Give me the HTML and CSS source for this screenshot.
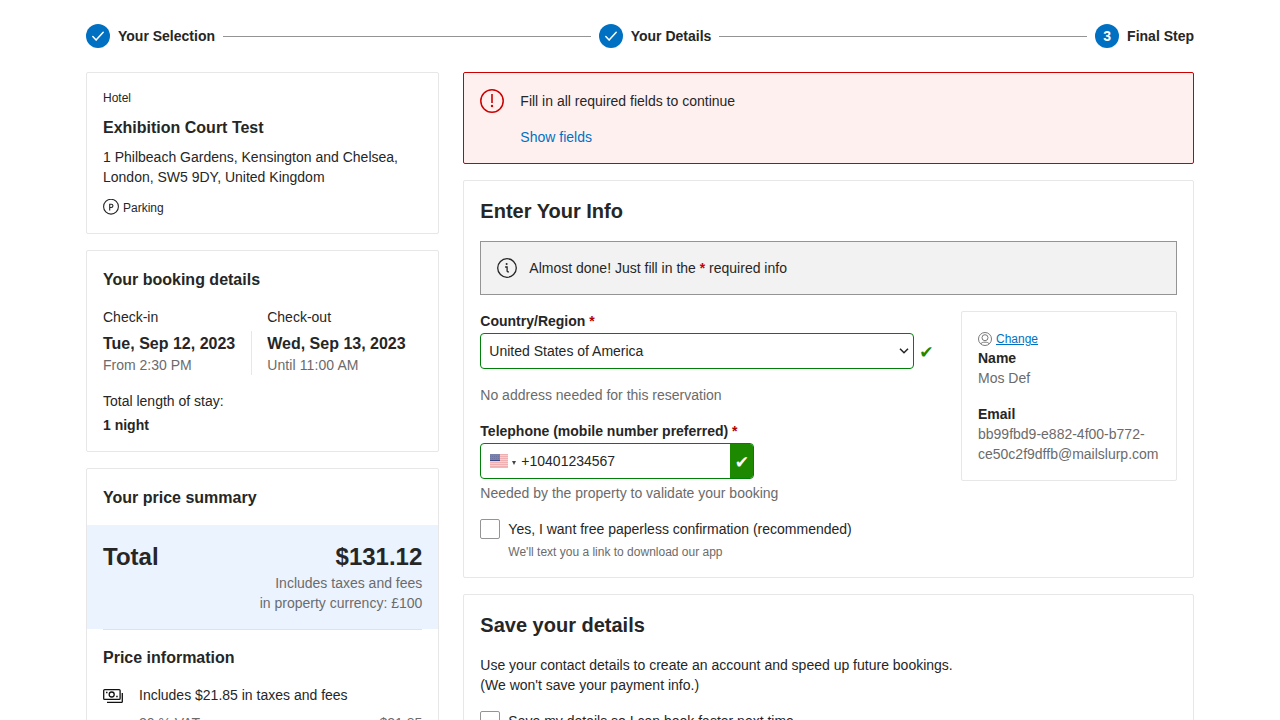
FILE: index.html
```html
<!DOCTYPE html>
<html lang="en">
<head>
<meta charset="utf-8">
<title>Final Step</title>
<link rel="stylesheet" href="styles.css">
</head>
<body>
<div class="page">
  <ol class="steps">
    <li class="step">
      <span class="step-dot"><svg width="16" height="16" viewBox="0 0 16 16"><path d="M2.8 8.6l3.3 3.5L13.2 4.2" fill="none" stroke="#fff" stroke-width="1.5" stroke-linecap="round" stroke-linejoin="round"/></svg></span>
      Your Selection
    </li>
    <li class="step-line"></li>
    <li class="step">
      <span class="step-dot"><svg width="16" height="16" viewBox="0 0 16 16"><path d="M2.8 8.6l3.3 3.5L13.2 4.2" fill="none" stroke="#fff" stroke-width="1.5" stroke-linecap="round" stroke-linejoin="round"/></svg></span>
      Your Details
    </li>
    <li class="step-line"></li>
    <li class="step"><span class="step-dot">3</span>Final Step</li>
  </ol>

  <div class="columns">
    <aside class="sidebar">
      <section class="card hotel">
        <div class="small">Hotel</div>
        <h2 class="title">Exhibition Court Test</h2>
        <div>1 Philbeach Gardens, Kensington and Chelsea, London, SW5 9DY, United Kingdom</div>
        <div class="facility small">
          <svg width="16" height="16" viewBox="0 0 16 16" fill="none" stroke="#262626"><circle cx="8" cy="7.7" r="7.4" stroke-width="1.1"/><path d="M6.7 11.4V5.2h1.6a1.6 1.6 0 0 1 0 3.3H6.7" stroke-width="1.1"/></svg>
          Parking
        </div>
      </section>

      <section class="card booking">
        <h2 class="title">Your booking details</h2>
        <div class="dates">
          <div class="date">
            <div>Check-in</div>
            <div class="date-body"><strong class="title">Tue, Sep 12, 2023</strong><span class="muted">From 2:30 PM</span></div>
          </div>
          <div class="date">
            <div>Check-out</div>
            <div class="date-body"><strong class="title">Wed, Sep 13, 2023</strong><span class="muted checkout-time">Until 11:00 AM</span></div>
          </div>
        </div>
        <div class="stay">Total length of stay:<strong>1 night</strong></div>
      </section>

      <section class="card price">
        <h2 class="title">Your price summary</h2>
        <div class="total">
          <div class="total-row"><span>Total</span><span>$131.12</span></div>
          <div class="total-note">Includes taxes and fees<br>in property currency: £100</div>
        </div>
        <div class="price-info">
          <h3 class="title">Price information</h3>
          <div class="tax">
            <svg width="20" height="20" viewBox="0 0 20 20" fill="none" stroke="#111" stroke-width="1.3"><rect x=".7" y="4.6" width="16.4" height="9.8" rx="1"/><circle cx="8.7" cy="9.5" r="2.5"/><path d="M3 7.5h1.5M13.2 11.5h1.5"/><path d="M19.3 8v8.7a.5.5 0 0 1-.5.6H4"/></svg>
            <div class="tax-body">
              <div>Includes $21.85 in taxes and fees</div>
              <div class="tax-row muted"><span>20 % VAT</span><span>$21.85</span></div>
            </div>
          </div>
        </div>
      </section>
    </aside>

    <main class="main">
      <section class="alert">
        <svg width="24" height="24" viewBox="0 0 24 24"><circle cx="12" cy="12" r="11.2" fill="none" stroke="#c00" stroke-width="1.5"/><path d="M12 5v9" stroke="#c00" stroke-width="1.6"/><circle cx="12" cy="17" r="1.2" fill="#c00"/></svg>
        <div class="alert-body">
          <div>Fill in all required fields to continue</div>
          <a class="link">Show fields</a>
        </div>
      </section>

      <section class="card info">
        <h1 class="heading">Enter Your Info</h1>
        <div class="notice">
          <svg width="20" height="20" viewBox="0 0 20 20"><circle cx="10" cy="10" r="9.3" fill="none" stroke="#262626" stroke-width="1.3"/><circle cx="9.6" cy="6.1" r="1" fill="#262626"/><path d="M8.1 9h2v3.7q0 1.4 1.9 1.1" fill="none" stroke="#262626" stroke-width="1.3"/></svg>
          <div>Almost done! Just fill in the <b class="req">*</b> required info</div>
        </div>
        <div class="form-row">
          <div class="fields">
            <label class="label" for="country">Country/Region <b class="req">*</b></label>
            <div class="select-row">
              <select id="country" class="select"><option>United States of America</option></select>
              <svg class="chevron" width="10" height="6" viewBox="0 0 10 6"><path d="M1 .8l4 3.900L9 .8" fill="none" stroke="#262626" stroke-width="1.600"/></svg>
              <span class="tick">✔</span>
            </div>
            <div class="hint-address muted">No address needed for this reservation</div>
            <label class="label">Telephone (mobile number preferred) <b class="req">*</b></label>
            <div class="phone">
              <svg class="flag" width="18" height="14" viewBox="0 0 18 14"><rect width="18" height="14" fill="#f6cfcf"/><path d="M0 .5h18M0 2.5h18M0 4.5h18M0 6.5h18M0 8.5h18M0 10.5h18M0 12.5h18" stroke="#f0b0b2"/><path d="M0 13.5h18" stroke="#e3bcbc"/><rect width="10" height="7" fill="#7a81aa"/><path d="M0 6.5h10" stroke="#3d4685"/><path d="M0 2.5h10M0 4.5h10" stroke="#6c749f" stroke-dasharray="1 1"/></svg>
              <svg class="caret" width="4" height="4" viewBox="0 0 4 4"><path d="M0 0h4L2 4z" fill="#444"/></svg>
              <span class="number">+10401234567</span>
              <span class="phone-ok">✔</span>
            </div>
            <div class="hint-phone muted">Needed by the property to validate your booking</div>
            <div class="check-row">
              <span class="box"></span>
              <div>Yes, I want free paperless confirmation (recommended)<div class="small muted check-note">We'll text you a link to download our app</div></div>
            </div>
          </div>
          <aside class="profile">
            <div class="change small">
              <svg width="14" height="14" viewBox="0 0 14 14" fill="none" stroke="#6b6b6b" stroke-width=".9"><circle cx="7" cy="7" r="6.5"/><circle cx="7" cy="5.7" r="3"/><path d="M2.8 11.9c.5-1.4 2.2-1.7 4.2-1.7s3.7.3 4.2 1.7"/></svg>
              <a class="link underlined">Change</a>
            </div>
            <strong>Name</strong>
            <div class="muted">Mos Def</div>
            <strong class="email">Email</strong>
            <div class="muted">bb99fbd9-e882-4f00-b772-<br>ce50c2f9dffb@mailslurp.com</div>
          </aside>
        </div>
      </section>

      <section class="card save">
        <h2 class="heading">Save your details</h2>
        <p class="save-text">Use your contact details to create an account and speed up future bookings.<br>(We won't save your payment info.)</p>
        <div class="check-row"><span class="box"></span><div>Save my details so I can book faster next time</div></div>
      </section>
    </main>
  </div>
</div>
</body>
</html>
```
FILE: styles.css
```css
* { box-sizing: border-box; }
html, body { height: 100%; overflow: hidden; }
body {
  margin: 0;
  background: #fff;
  color: #262626;
  font: 14px/20px "Liberation Sans", Arial, sans-serif;
}
h1, h2, h3, p, ol { margin: 0; padding: 0; }
strong { display: block; }
svg { display: block; flex: none; }

.page { width: 1108px; margin: 0 auto; padding-top: 24px; }
.small { font-size: 12px; line-height: 18px; }
.muted { color: #6b6b6b; }
.title { font-size: 16px; line-height: 26px; font-weight: 700; margin-bottom: -2px; }
.heading { font-size: 20px; line-height: 28px; }
.link { color: #0071c2; }
.underlined { text-decoration: underline; }
.req { color: #b00000; }

.steps { display: flex; align-items: center; gap: 8px; list-style: none; font-weight: 700; }
.step { display: flex; align-items: center; gap: 8px; }
.step-dot {
  display: flex; align-items: center; justify-content: center;
  width: 24px; height: 24px; border-radius: 50%;
  background: #0071c2; color: #fff;
}
.step-line { flex: 1; height: 1px; background: #949494; }

.columns { display: flex; align-items: flex-start; gap: 24px; margin-top: 24px; }
.sidebar { width: 353.33px; flex: none; display: flex; flex-direction: column; gap: 16px; }
.main { flex: 1; display: flex; flex-direction: column; gap: 16px; }
.card { border: 1px solid #e7e7e7; border-radius: 2px; padding: 16px; }

.hotel .title { margin: 8px 0 6px; }
.facility { display: flex; gap: 4px; margin-top: 12px; }

.dates { display: flex; margin-top: 16px; }
.date-body { margin-top: 4px; padding-right: 16px; }
.date:first-child .date-body { border-right: 1px solid #e7e7e7; }
.date + .date { padding-left: 15px; }
.date-body span { display: block; }
.checkout-time { letter-spacing: .1px; }
.stay { margin-top: 16px; }
.stay strong { margin-top: 4px; }

.price { padding: 16px 0; }
.price > .title { padding: 0 16px; }
.total { margin-top: 16px; padding: 16px; background: #ebf3ff; }
.total-row { display: flex; justify-content: space-between; font-size: 24px; line-height: 32px; font-weight: 700; }
.total-note { text-align: right; color: #6b6b6b; }
.price-info { margin: 0 16px; border-top: 1px solid #e0e2e6; padding-top: 15px; }
.tax { display: flex; gap: 16px; margin-top: 16px; }
.tax-body { flex: 1; }
.tax-row { display: flex; justify-content: space-between; margin-top: 8px; }

.alert { display: flex; gap: 16px; padding: 16px; border: 1px solid #c00; border-radius: 2px; background: #fff0f0; }
.alert-body { padding-top: 2px; }
.alert .link { display: block; margin-top: 16px; }

.notice { display: flex; align-items: center; gap: 12px; height: 54px; margin-top: 16px; padding: 0 16px; border: 1px solid #949494; background: #f2f2f2; }
.notice .req { color: #c00; }
.form-row { display: flex; justify-content: space-between; align-items: flex-start; margin-top: 16px; }
.label { display: block; font-weight: 700; }
.select-row { display: flex; align-items: center; margin-top: 2px; }
.select {
  appearance: none;
  width: 434px; height: 36px; padding: 0 8px;
  border: 1px solid #008009; border-radius: 4px;
  background: #fff; color: #262626; font: inherit;
}
.chevron { margin-left: -15px; pointer-events: none; }
.tick { margin-left: 10px; padding-top: 2px; color: #1c8900; font: 17px/20px "DejaVu Sans", sans-serif; }
.hint-address { margin: 16px 0; }
.phone {
  display: flex; align-items: center;
  width: 274px; height: 36px; margin-top: 2px; padding-left: 9px;
  border: 1px solid #008009; border-radius: 4px; overflow: hidden;
}
.caret { margin: 4px 5px 0 4px; }
.number { flex: 1; }
.phone-ok { width: 23px; height: 36px; background: #1c8900; color: #fff; text-align: center; font: 17px/39px "DejaVu Sans", sans-serif; }
.hint-phone { margin: 4px 0 16px; }
.check-row { display: flex; gap: 8px; }
.box { width: 20px; height: 20px; flex: none; border: 1px solid #949494; border-radius: 2px; }
.check-note { margin-top: 4px; }

.profile { width: 216px; height: 170px; padding: 18px 16px 0; border: 1px solid #e7e7e7; border-radius: 2px; }
.change { display: flex; align-items: center; gap: 4px; }
.email { margin-top: 16px; }

.save-text { margin: 16px 0; }
```
